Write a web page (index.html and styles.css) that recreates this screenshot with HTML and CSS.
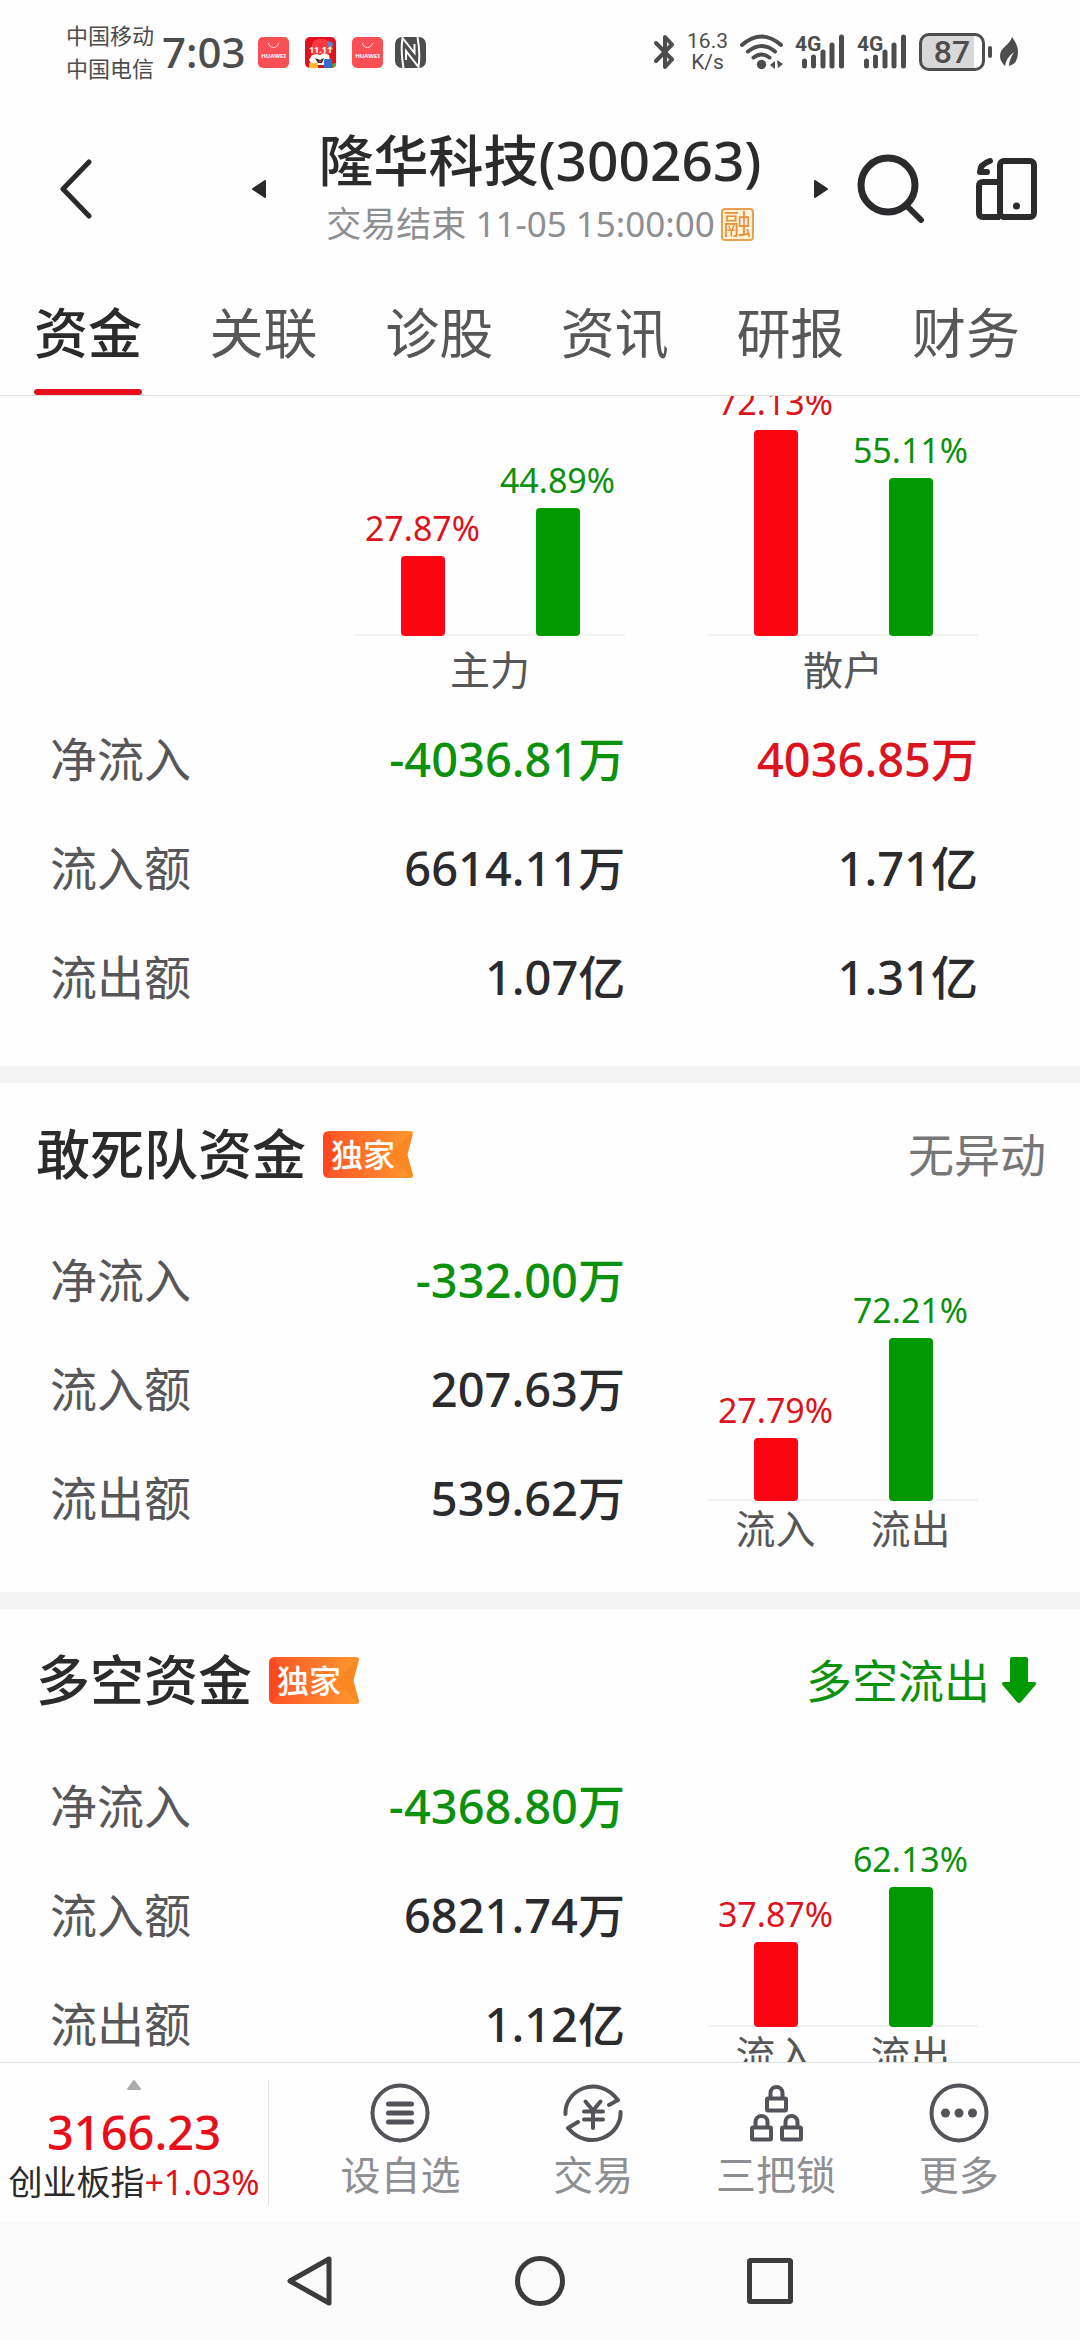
FILE: index.html
```html
<!DOCTYPE html>
<html lang="zh-CN">
<head>
<meta charset="utf-8">
<meta name="viewport" content="width=device-width, initial-scale=1">
<title>隆华科技(300263)</title>
<link rel="stylesheet" href="styles.css">
</head>
<body>
<div class="app">
  <div class="status">
    <div class="status-group">
      <div class="carriers"><span>中国移动</span><span>中国电信</span></div>
      <span class="clock">7:03</span>
      <div class="notices">
        <svg width="31" height="31" viewBox="0 0 31 31"><rect width="31" height="31" rx="5" fill="#fb4f56"/><path d="M10.500 6a5 4.500 0 0 0 10 0" fill="none" stroke="#ffd9da" stroke-width="1"/><text x="15.500" y="20.500" text-anchor="middle" class="mini-brand">HUAWEI</text></svg>
        <svg width="31" height="31" viewBox="0 0 31 31"><rect width="31" height="31" rx="5" fill="#e0101c"/><path d="M7 8Q9 1 16 2q7-1 9 6l1 9H6z" fill="#ff3a3f"/><path d="M23 4l5 2-1 6-4-2z" fill="#5c86d8"/><path d="M25 8l3 4-3 2z" fill="#f59a3a"/><text x="15.500" y="16" text-anchor="middle" class="mini-sale">11.11</text><path d="M4 23l3-5 5-1 3 1 4-2 5 2 1 5-3 5H7z" fill="#fff"/><path d="M10 21l5 2 4-2-2 5h-4z" fill="#222"/><path d="M13 24l4-1-2 3z" fill="#e33"/><rect x="19" y="22" width="8" height="9" rx="1" fill="#2c6fd1"/><path d="M4 26h9v5H4z" fill="#fdbb2d"/><path d="M27 27l4-1v3l-3 2z" fill="#4fae3a"/></svg>
        <svg width="31" height="31" viewBox="0 0 31 31"><rect width="31" height="31" rx="5" fill="#fb4f56"/><path d="M10.500 6a5 4.500 0 0 0 10 0" fill="none" stroke="#ffd9da" stroke-width="1"/><text x="15.500" y="20.500" text-anchor="middle" class="mini-brand">HUAWEI</text></svg>
      </div>
      <svg width="31" height="31" viewBox="0 0 31 31"><rect width="31" height="31" rx="7" fill="#4d4d4d"/><path d="M8.500 31Q5.500 15 7.500 1l12 15V7M22.500 0q3 16 1 30L11 14v9" fill="none" stroke="#fefefe" stroke-width="2"/></svg>
    </div>
    <div class="status-group status-right">
      <svg width="21" height="36" viewBox="0 0 21 36"><path d="M2 9l16 16.500-7 7.500V3l7 7.500L2 27" fill="none" stroke="#4d4d4d" stroke-width="4" stroke-linejoin="round" stroke-linecap="round"/></svg>
      <div class="speed"><span>16.3</span><span>K/s</span></div>
      <svg width="43" height="36" viewBox="0 0 43 36"><g fill="none" stroke="#4d4d4d" stroke-width="4" stroke-linecap="round"><path d="M2 11q19.500-17 39 0"/><path d="M8 17.500q13.500-11 27 0"/><path d="M13.500 23.500q8-6 16 0"/></g><circle cx="21.500" cy="30.500" r="4.700" fill="#4d4d4d"/><path d="M30 31l5-4v8zM37 26l6 4-5 4z" fill="#4d4d4d"/></svg>
      <svg class="signal" width="50" height="36" viewBox="0 0 50 36"><text x="0" y="17">4G</text><path d="M9.500 27v5M18.500 23v9M28 18v14M37 11v21M46.500 3v29"/></svg>
      <svg class="signal" width="50" height="36" viewBox="0 0 50 36"><text x="0" y="17">4G</text><path d="M9.500 27v5M18.500 23v9M28 18v14M37 11v21M46.500 3v29"/></svg>
      <div class="battery"><span>87</span></div>
      <svg width="18" height="30" viewBox="0 0 18 30"><path d="M12 0q6 8 6 15 0 12-9 14 0-6 5-14-8 6-9 14Q0 24 0 19C0 10 10 8 12 0z" fill="#4d4d4d"/></svg>
    </div>
  </div>

  <header class="header">
    <button class="icon-btn back" aria-label="返回"><svg width="32" height="60" viewBox="0 0 32 60"><path d="M29 3L3 30l26 27" fill="none" stroke="#2b2b2d" stroke-width="5" stroke-linecap="round" stroke-linejoin="round"/></svg></button>
    <div class="switcher">
      <button class="icon-btn" aria-label="上一只"><svg width="14" height="18" viewBox="0 0 14 18"><path d="M13 1v16L1 9z" fill="#2b2b2d" stroke="#2b2b2d" stroke-width="2" stroke-linejoin="round"/></svg></button>
      <div class="stock">
        <h1>隆华科技(300263)</h1>
        <p><span>交易结束 11-05 15:00:00</span><span class="margin-tag">融</span></p>
      </div>
      <button class="icon-btn" aria-label="下一只"><svg width="14" height="18" viewBox="0 0 14 18"><path d="M1 1v16l12-8z" fill="#2b2b2d" stroke="#2b2b2d" stroke-width="2" stroke-linejoin="round"/></svg></button>
    </div>
    <div class="tools">
      <button class="icon-btn" aria-label="搜索"><svg width="68" height="70" viewBox="0 0 68 70"><circle cx="31" cy="31" r="27" fill="none" stroke="#2b2b2d" stroke-width="7"/><path d="M50 52l14 14" stroke="#2b2b2d" stroke-width="6" stroke-linecap="round"/></svg></button>
      <button class="icon-btn" aria-label="分屏"><svg width="61" height="62" viewBox="0 0 61 62"><g fill="none" stroke="#2b2b2d" stroke-width="6"><rect x="24" y="3" width="34" height="56" rx="4"/><path d="M24 24H7q-4 0-4 4v27q0 4 4 4h17"/></g><path d="M14 3Q4 6 4 14h7" fill="none" stroke="#2b2b2d" stroke-width="6" stroke-linecap="round" stroke-linejoin="round"/><circle cx="40.500" cy="48" r="3.500" fill="#2b2b2d"/></svg></button>
    </div>
  </header>

  <nav class="tabs">
    <button class="tab active">资金</button>
    <button class="tab">关联</button>
    <button class="tab">诊股</button>
    <button class="tab">资讯</button>
    <button class="tab">研报</button>
    <button class="tab">财务</button>
  </nav>

  <main class="content">
    <section class="panel panel-first">
      <div class="charts">
        <figure class="chart chart-main">
          <div class="plot">
            <div class="col"><span class="pct red">27.87%</span><i class="bar bar-red" style="height:80px"></i></div>
            <div class="col"><span class="pct green">44.89%</span><i class="bar bar-green" style="height:128px"></i></div>
          </div>
          <figcaption>主力</figcaption>
        </figure>
        <figure class="chart chart-retail">
          <div class="plot">
            <div class="col"><span class="pct red">72.13%</span><i class="bar bar-red" style="height:206px"></i></div>
            <div class="col"><span class="pct green">55.11%</span><i class="bar bar-green" style="height:158px"></i></div>
          </div>
          <figcaption>散户</figcaption>
        </figure>
      </div>
      <table class="flow flow-two">
        <colgroup><col class="c-label"><col class="c-main"><col class="c-retail"></colgroup>
        <tr><th scope="row">净流入</th><td class="green">-4036.81万</td><td class="red">4036.85万</td></tr>
        <tr><th scope="row">流入额</th><td>6614.11万</td><td>1.71亿</td></tr>
        <tr><th scope="row">流出额</th><td>1.07亿</td><td>1.31亿</td></tr>
      </table>
    </section>

    <section class="panel">
      <div class="panel-head">
        <h2>敢死队资金</h2>
        <span class="ribbon"><svg width="90" height="47" viewBox="0 0 90 47" preserveAspectRatio="none"><defs><linearGradient id="rg" x1="0" y1="0" x2="1" y2="0"><stop offset="0" stop-color="#fd5426"/><stop offset="1" stop-color="#fe982f"/></linearGradient></defs><path d="M6 0h81q4 0 2.500 4L85 21q-1 2.500 0 5l4.500 17q1.500 4-2.500 4H6q-6 0-6-6V6q0-6 6-6z" fill="url(#rg)"/><path d="M0 6v35q0 3 3 5l14-26L5 1Q0 2 0 6z" fill="#fd3f1a" opacity=".6"/><path d="M89 1L68 24l20 22q3-1 1.500-4L85 26q-1-2.500 0-5l4.500-17z" fill="#fb831c" opacity=".7"/></svg><b>独家</b></span>
        <span class="state">无异动</span>
      </div>
      <div class="panel-body">
        <table class="flow">
          <tr><th scope="row">净流入</th><td class="green">-332.00万</td></tr>
          <tr><th scope="row">流入额</th><td>207.63万</td></tr>
          <tr><th scope="row">流出额</th><td>539.62万</td></tr>
        </table>
        <div class="chart chart-side">
          <div class="plot">
            <div class="col"><span class="pct red">27.79%</span><i class="bar bar-red" style="height:63px"></i></div>
            <div class="col"><span class="pct green">72.21%</span><i class="bar bar-green" style="height:163px"></i></div>
          </div>
          <div class="legend"><span>流入</span><span>流出</span></div>
        </div>
      </div>
    </section>

    <section class="panel">
      <div class="panel-head">
        <h2>多空资金</h2>
        <span class="ribbon"><svg width="90" height="47" viewBox="0 0 90 47" preserveAspectRatio="none"><path d="M6 0h81q4 0 2.500 4L85 21q-1 2.500 0 5l4.500 17q1.500 4-2.500 4H6q-6 0-6-6V6q0-6 6-6z" fill="url(#rg)"/><path d="M0 6v35q0 3 3 5l14-26L5 1Q0 2 0 6z" fill="#fd3f1a" opacity=".6"/><path d="M89 1L68 24l20 22q3-1 1.500-4L85 26q-1-2.500 0-5l4.500-17z" fill="#fb831c" opacity=".7"/></svg><b>独家</b></span>
        <span class="state state-out">多空流出<svg width="34" height="46" viewBox="0 0 34 46"><path d="M10 0h14q2 0 2 2v23h6q3 0 1.500 3L19 45q-2 2-4 0L.500 28Q-1 25 2 25h6V2q0-2 2-2z" fill="#009a00"/></svg></span>
      </div>
      <div class="panel-body">
        <table class="flow">
          <tr><th scope="row">净流入</th><td class="green">-4368.80万</td></tr>
          <tr><th scope="row">流入额</th><td>6821.74万</td></tr>
          <tr><th scope="row">流出额</th><td>1.12亿</td></tr>
        </table>
        <div class="chart chart-side">
          <div class="plot">
            <div class="col"><span class="pct red">37.87%</span><i class="bar bar-red" style="height:85px"></i></div>
            <div class="col"><span class="pct green">62.13%</span><i class="bar bar-green" style="height:140px"></i></div>
          </div>
          <div class="legend"><span>流入</span><span>流出</span></div>
        </div>
      </div>
    </section>
  </main>

  <footer class="toolbar">
    <button class="index">
      <svg width="14" height="10" viewBox="0 0 14 10"><path d="M7 1l6 8H1z" fill="#aaabad" stroke="#aaabad" stroke-width="2" stroke-linejoin="round"/></svg>
      <strong>3166.23</strong>
      <span>创业板指<em>+1.03%</em></span>
    </button>
    <div class="actions">
      <button class="action"><svg viewBox="0 0 60 60"><circle cx="30" cy="30" r="27.500"/><path d="M18.500 21h23M18.500 30h23M18.500 39h23" stroke-width="5"/></svg>设自选</button>
      <button class="action"><svg viewBox="0 0 60 60"><path d="M2.500 31C1 8 34-10 55 17l-9 5"/><path d="M57.500 29C59 52 26 70 5 45l10-6"/><path d="M22.500 18.500l7.500 9 7.500-9M30 28v17M21 28.500h19M21 36.500h19"/></svg>交易</button>
      <button class="action"><svg viewBox="0 0 60 60"><g id="lock"><rect x="21" y="15.500" width="19" height="12" rx="1"/><path d="M24.500 15V10a6 6 0 0 1 12 0v5"/></g><use href="#lock" x="-15" y="29"/><use href="#lock" x="15" y="29"/></svg>三把锁</button>
      <button class="action"><svg viewBox="0 0 60 60"><circle cx="30" cy="30" r="27.500"/><g class="dots"><circle cx="16.500" cy="30" r="4.500"/><circle cx="30" cy="30" r="4.500"/><circle cx="43.500" cy="30" r="4.500"/></g></svg>更多</button>
    </div>
  </footer>

  <nav class="sysnav">
    <button class="icon-btn" aria-label="返回"><svg width="50" height="50" viewBox="0 0 50 50"><path d="M44 3v44L5 25z"/></svg></button>
    <button class="icon-btn" aria-label="主屏幕"><svg width="50" height="50" viewBox="0 0 50 50"><circle cx="25" cy="25" r="22.500"/></svg></button>
    <button class="icon-btn" aria-label="最近任务"><svg width="50" height="50" viewBox="0 0 50 50"><rect x="4.500" y="4.500" width="41" height="41" rx="1"/></svg></button>
  </nav>
</div>
</body>
</html>
```

FILE: styles.css
```css
* { box-sizing: border-box; }

body {
  margin: 0;
  background: #fefefe;
  color: #2b2b2d;
  font-family: "Noto Sans", "Noto Sans CJK SC", sans-serif;
}

h1, h2, p, figure { margin: 0; }

svg { display: block; flex: none; }

button {
  padding: 0;
  border: 0;
  background: none;
  color: inherit;
  font: inherit;
}

.icon-btn {
  display: flex;
  align-items: center;
  justify-content: center;
}

.red { color: #dc1420; }
.green { color: #0c910c; }

.app {
  display: flex;
  flex-direction: column;
  height: 100vh;
  overflow: hidden;
}

/* Status bar */
.status {
  flex: none;
  display: flex;
  align-items: center;
  justify-content: space-between;
  height: 100px;
  padding: 4px 62px 0 66px;
  color: #4d4d4d;
}

.status-group {
  display: flex;
  align-items: center;
  gap: 12px;
}

.carriers {
  display: flex;
  flex-direction: column;
  font-size: 22px;
  line-height: 33px;
}

.clock {
  margin-left: -4px;
  font-size: 42px;
  font-weight: 500;
  line-height: 50px;
}

.notices { display: flex; gap: 16px; }

.mini-brand { font-size: 6px; font-weight: 700; fill: #fff; }
.mini-sale { font-size: 9px; font-weight: 700; fill: #fff; }

.speed {
  display: flex;
  flex-direction: column;
  align-items: center;
  font: 400 21px/21px Roboto, sans-serif;
}

.signal { overflow: visible; }
.signal text { font: 700 21px Roboto, sans-serif; fill: #4d4d4d; }
.signal path {
  fill: none;
  stroke: #4d4d4d;
  stroke-width: 5px;
  stroke-linecap: round;
}

.battery {
  display: flex;
  align-items: center;
  margin-right: -4px;
}

.battery span {
  width: 66px;
  border: 3px solid #4d4d4d;
  border-radius: 10px;
  background: linear-gradient(90deg, #d8d8d8 87%, #fefefe 87%);
  font: 500 32px/32px Roboto, sans-serif;
  text-align: center;
}

.battery::after {
  content: "";
  width: 4px;
  height: 12px;
  margin-left: 3px;
  border-radius: 2px;
  background: #4d4d4d;
}

/* Title bar */
.header {
  flex: none;
  display: grid;
  grid-template-columns: 1fr 576px 1fr;
  align-items: center;
  height: 178px;
}

.back { justify-self: start; margin-left: 60px; }

.switcher {
  display: flex;
  align-items: center;
  justify-content: space-between;
}

.stock { padding-top: 6px; text-align: center; white-space: nowrap; }

.stock h1 {
  font-size: 55px;
  font-weight: 500;
  line-height: 64px;
}

.stock p {
  display: flex;
  align-items: center;
  justify-content: center;
  gap: 6px;
  color: #8e8f93;
  font-size: 35px;
  line-height: 64px;
}

.margin-tag {
  width: 33px;
  border: 2px solid #e8a056;
  border-radius: 4px;
  background: #fff4d8;
  color: #e8913c;
  font-size: 28px;
  line-height: 29px;
  text-align: center;
}

.tools {
  display: flex;
  align-items: center;
  justify-content: space-between;
  padding: 0 43px 0 29px;
}

/* Tabs */
.tabs {
  flex: none;
  display: flex;
  justify-content: space-between;
  padding: 0 60px 0 34px;
  border-bottom: 1px solid #e2e2e2;
}

.tab {
  height: 117px;
  padding-bottom: 6px;
  color: #575759;
  font-size: 54px;
  line-height: 111px;
}

.tab::after {
  content: "";
  display: block;
  height: 6px;
  border-radius: 3px;
}

.tab.active { color: #2b2b2d; font-weight: 500; }
.tab.active::after { background: #e60f1b; }

.tab { padding-bottom: 0; }

/* Scrolling content */
.content {
  flex: 1;
  min-height: 0;
  overflow: hidden;
}

.panel { padding-bottom: 40px; }
.panel + .panel { border-top: 17px solid #f4f4f4; }
.panel-first { padding: 0 102px 35px 50px; }

.panel-head {
  display: flex;
  align-items: center;
  height: 142px;
  padding: 0 34px 0 36px;
}

.panel-head h2 {
  font-size: 54px;
  font-weight: 500;
  line-height: 64px;
}

.ribbon {
  display: grid;
  margin-left: 17px;
}

.ribbon svg, .ribbon b { grid-area: 1 / 1; }

.ribbon b {
  z-index: 1;
  padding-left: 8px;
  color: #fff;
  font-size: 32px;
  font-weight: 500;
  line-height: 47px;
}

.state {
  display: flex;
  align-items: center;
  gap: 12px;
  margin-left: auto;
  color: #777;
  font-size: 46px;
  line-height: 64px;
}

.state-out { padding-right: 10px; color: #0c910c; }

.panel-body {
  display: grid;
  grid-template-columns: 575fr 270fr;
  column-gap: 83px;
  padding: 0 102px 0 50px;
}

.flow {
  width: 100%;
  border-collapse: collapse;
  font-size: 47px;
  line-height: 64px;
}

.flow-two { table-layout: fixed; }
.c-label { width: 33%; }
.c-main { width: 29%; }
.c-retail { width: 38%; }

.flow th {
  height: 109px;
  padding: 0;
  color: #575759;
  font-weight: 400;
  text-align: left;
}

.flow td {
  padding: 0;
  font-weight: 500;
  text-align: right;
  white-space: nowrap;
}

/* Bar charts */
.charts {
  display: grid;
  grid-template-columns: 305fr 270fr 83fr 270fr;
}

.chart-main { grid-column: 2; }
.chart-retail { grid-column: 4; }

.plot {
  display: grid;
  grid-template-columns: 1fr 1fr;
  background: linear-gradient(#f2f2f2, #f2f2f2) bottom / 100% 2px no-repeat;
}

.charts .plot { height: 240px; }

.col {
  display: flex;
  flex-direction: column;
  align-items: center;
  justify-content: flex-end;
  min-width: 0;
  min-height: 0;
}

.pct {
  margin-bottom: 8px;
  font-size: 34px;
  line-height: 40px;
}

.bar {
  flex: none;
  width: 44px;
  border-radius: 4px;
}

.bar-red { background: #fa0511; }
.bar-green { background: #009a00; }

.chart figcaption {
  padding: 14px 0;
  color: #575759;
  font-size: 40px;
  line-height: 40px;
  text-align: center;
}

.chart-side { align-self: end; padding-bottom: 3px; }

.legend {
  display: grid;
  grid-template-columns: 1fr 1fr;
  padding-top: 8px;
  color: #575759;
  font-size: 40px;
  line-height: 40px;
  text-align: center;
}

/* Bottom toolbar */
.toolbar {
  flex: none;
  display: flex;
  align-items: center;
  height: 160px;
  border-top: 1px solid #e2e2e2;
}

.index {
  display: flex;
  flex-direction: column;
  align-items: center;
  width: 269px;
  height: 125px;
  border-right: 1px solid #e2e2e2;
  white-space: nowrap;
}

.index strong {
  margin-top: 12px;
  color: #e60f1b;
  font-size: 47px;
  font-weight: 500;
  line-height: 60px;
}

.index span { font-size: 34px; line-height: 40px; }
.index em { color: #dc1420; font-style: normal; }

.actions {
  flex: 1;
  display: grid;
  grid-template-columns: 10fr 9fr 9fr 9fr;
  padding: 0 30px;
}

.action {
  display: flex;
  flex-direction: column;
  align-items: center;
  gap: 4px;
  color: #8e8f93;
  font-size: 40px;
  line-height: 56px;
}

.action svg {
  width: 60px;
  height: 60px;
  fill: none;
  stroke: #53535a;
  stroke-width: 4px;
  stroke-linecap: round;
  stroke-linejoin: round;
}

.action .dots { fill: #53535a; stroke: none; }

/* System navigation */
.sysnav {
  flex: none;
  display: grid;
  grid-template-columns: repeat(3, 230px);
  justify-content: center;
  height: 118px;
  background: #fbfbfb;
}

.sysnav svg {
  fill: none;
  stroke: #3c3c3c;
  stroke-width: 5px;
  stroke-linejoin: round;
}
```
